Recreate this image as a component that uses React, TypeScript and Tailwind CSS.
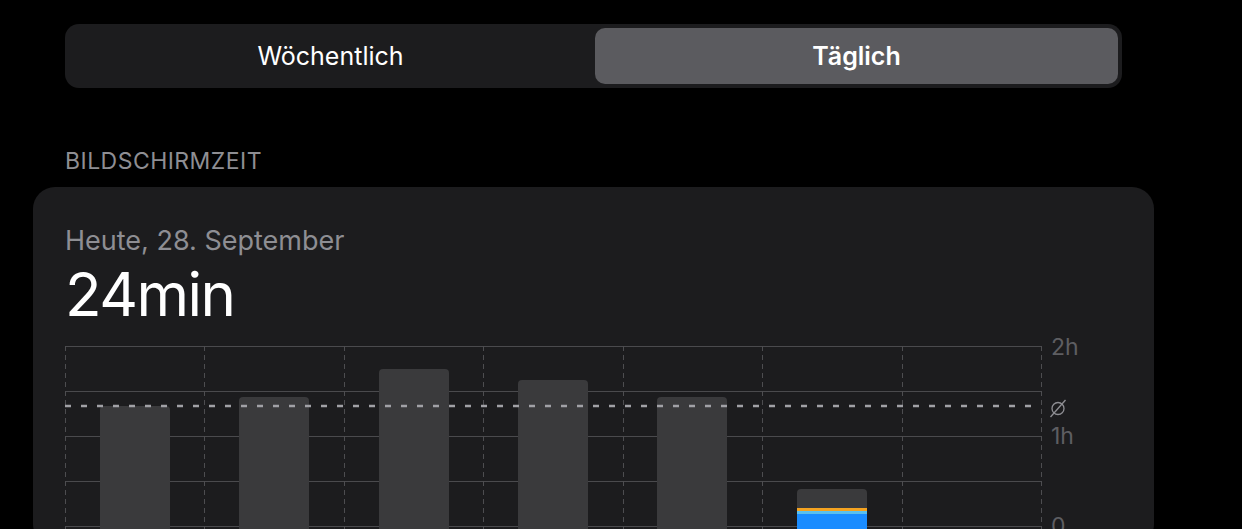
import React from "react"

const colW = 976 / 7

const bars = [
  { top: 60 },
  { top: 51 },
  { top: 23 },
  { top: 34 },
  { top: 51 },
  { top: 143, today: true },
]

function barPath(x: number, y: number, w: number, h: number, r: number) {
  return `M${x} ${y + h} V${y + r} Q${x} ${y} ${x + r} ${y} H${x + w - r} Q${x + w} ${y} ${x + w} ${y + r} V${y + h} Z`
}

function Chart() {
  return (
    <svg width="1090" height="200" className="block" style={{ overflow: "visible" }}>
      {[0, 45, 90, 135, 180].map((y) => (
        <line key={y} x1={0} x2={976} y1={y + 0.5} y2={y + 0.5} stroke="#4a4a4d" strokeWidth={1} />
      ))}
      {Array.from({ length: 8 }).map((_, i) => {
        const x = Math.round(i * colW) + 0.5
        return (
          <line key={i} x1={x} x2={x} y1={0} y2={200} stroke="#4d4d50" strokeWidth={1} strokeDasharray="5 4" />
        )
      })}
      {bars.map((b, i) => {
        const x = Math.round(i * colW + (colW - 70) / 2)
        if (b.today) {
          return (
            <g key={i}>
              <path d={barPath(x, b.top, 70, 200 - b.top, 4)} fill="#3a3a3c" />
              <rect x={x} y={162} width={70} height={3} fill="#f4a321" />
              <rect x={x} y={165} width={70} height={3} fill="#5ac0ee" />
              <rect x={x} y={168} width={70} height={40} fill="#1a8cff" />
            </g>
          )
        }
        return <path key={i} d={barPath(x, b.top, 70, 200 - b.top, 4)} fill="#3a3a3c" />
      })}
      <line x1={0} x2={976} y1={60} y2={60} stroke="#a1a1a6" strokeWidth={2.5} strokeDasharray="6 10" />
      <g fill="none" stroke="#8e8e93" strokeWidth={1.3}>
        <circle cx={993} cy={62.5} r={6} />
        <line x1={1000.5} y1={54} x2={985.5} y2={71} />
      </g>
      <g fontFamily="Inter, 'Noto Sans', sans-serif" fill="#5e5e62" fontSize={23}>
        <text x={986} y={3} dominantBaseline="middle">2h</text>
        <text x={986} y={92} dominantBaseline="middle">1h</text>
        <text x={986} y={182} dominantBaseline="middle">0</text>
      </g>
    </svg>
  )
}

export default function App() {
  return (
    <div className="h-[529px] overflow-hidden bg-black font-['Inter','Noto_Sans',sans-serif] text-white">
      <div className="pt-6 pl-[65px]">
        <div className="flex h-16 w-[1057px] gap-[3px] rounded-[14px] bg-[#1c1c1e] p-1">
          <button className="flex flex-1 items-center justify-center rounded-[10px] pt-0.5 text-[25px] font-normal text-white">
            Wöchentlich
          </button>
          <button className="flex flex-1 items-center justify-center rounded-[10px] bg-[#5b5b5f] pt-0.5 text-[25px] font-semibold text-white">
            Täglich
          </button>
        </div>
        <div className="mt-[58px] text-[23px] leading-[30px] tracking-[0.02em] text-[#8e8e93]">BILDSCHIRMZEIT</div>
      </div>
      <div className="mt-[11px] ml-[33px] w-[1121px] rounded-[22px] bg-[#1c1c1e] pt-[37px] pl-8">
        <div className="text-[27px] leading-[34px] text-[#8e8e93]">Heute, 28. September</div>
        <div className="mt-1 text-[60px] leading-[64px] font-normal tracking-tight">24min</div>
        <div className="mt-5">
          <Chart />
        </div>
      </div>
    </div>
  )
}
